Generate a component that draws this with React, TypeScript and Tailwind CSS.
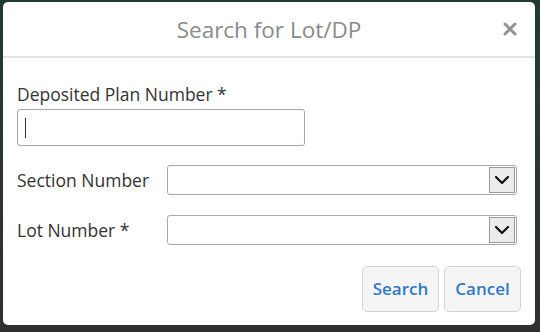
const font = { fontFamily: '"Open Sans", "Noto Sans", sans-serif' };

const Chevron = () => (
  <svg width="16" height="10" viewBox="0 0 16 10" fill="none">
    <path d="M2 2 L8 8 L14 2" stroke="#111" strokeWidth="2.2" strokeLinecap="round" strokeLinejoin="round" />
  </svg>
);

const CloseIcon = () => (
  <svg width="14" height="14" viewBox="0 0 14 14" fill="none">
    <path d="M2 2 L12 12 M12 2 L2 12" stroke="#929292" strokeWidth="3" strokeLinecap="round" />
  </svg>
);

const SelectBox = () => (
  <div className="flex h-[30px] w-[350px] items-stretch rounded-[3px] border border-[#a9a9a9] bg-white">
    <div className="flex-1" />
    <div className="m-px flex w-[26px] items-center justify-center border border-[#9a9a9a] bg-[#ececec]">
      <Chevron />
    </div>
  </div>
);

const App: React.FC = () => {
  return (
    <div className="h-[332px] w-[540px] bg-gradient-to-b from-[#1f3b31] to-[#303030] pl-[3px] pt-[2px]" style={font}>
      <div className="flex h-[323px] w-[532px] flex-col rounded-[5px] bg-white">
        <div className="relative flex h-[56px] items-center justify-center border-b-2 border-[#e3e3e3] pt-[2px]">
          <h2 className="text-[22.5px] text-[#8a8a8a]">Search for Lot/DP</h2>
          <span className="absolute right-[18px] top-[20px]">
            <CloseIcon />
          </span>
        </div>
        <div className="flex flex-1 flex-col px-[14px] pt-[24px]">
          <label className="text-[17.5px] leading-[24px] text-[#333]">Deposited Plan Number *</label>
          <div className="mt-[3px] flex h-[37px] w-[288px] items-center rounded-[3px] border border-[#a9a9a9] bg-white pl-[7px]">
            <div className="h-[20px] w-px bg-[#333]" />
          </div>
          <div className="mt-[19px] flex items-center">
            <span className="w-[150px] text-[17.5px] text-[#333]">Section Number</span>
            <SelectBox />
          </div>
          <div className="mt-[20px] flex items-center">
            <span className="w-[150px] text-[17.5px] text-[#333]">Lot Number *</span>
            <SelectBox />
          </div>
          <div className="mt-[21px] flex justify-end gap-[5px]">
            <button className="h-[46px] w-[77px] rounded-[5px] border border-[#d4d4d4] bg-[#f5f5f5] text-[17px] font-semibold text-[#2f79c9]">Search</button>
            <button className="h-[46px] w-[77px] rounded-[5px] border border-[#d4d4d4] bg-[#f5f5f5] text-[17px] font-semibold text-[#2f79c9]">Cancel</button>
          </div>
        </div>
      </div>
    </div>
  );
};

export default App;
